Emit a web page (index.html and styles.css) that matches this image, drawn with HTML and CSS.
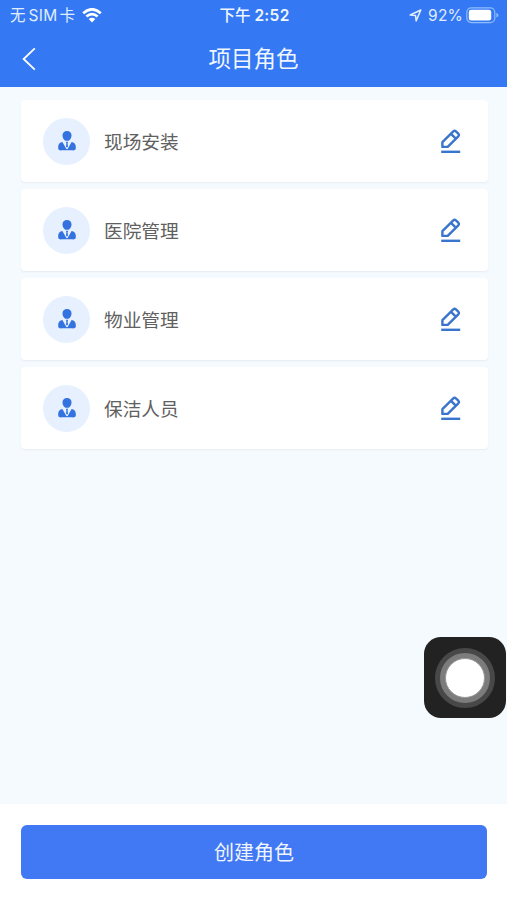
FILE: index.html
```html
<!DOCTYPE html>
<html lang="zh-CN">

<head>
    <meta charset="UTF-8">
    <title>项目角色</title>
    <link rel="stylesheet" href="styles.css">
</head>

<body>
    <!-- Shared icons -->
    <svg class="icon-defs">
        <symbol id="icon-person" viewBox="0 0 18 20">
            <path d="M9 0C6.2 0 4.5 1.8 4.5 4.4C4.5 6.7 5.9 9 7.5 9.8H10.5C12.1 9 13.5 6.7 13.5 4.4C13.5 1.8 11.8 0 9 0Z" />
            <path d="M4.4 10.9L8.2 17.8L3 19.3H2Q0.2 19.3 0.2 17.5V15.6C0.2 13 1.8 11.2 4.4 10.9ZM13.6 10.9L9.8 17.8L15 19.3H16Q17.8 19.3 17.8 17.5V15.6C17.8 13 16.2 11.2 13.6 10.9Z" />
            <path d="M2 19.3V17.2H7.5L8.4 18.2L9 17.8L9.6 18.2L10.5 17.2H16V19.3Z" />
            <path d="M7.9 10.8H10.1L9.6 12.6L10 15.4L9 16.7L8 15.4L8.4 12.6Z" />
        </symbol>
        <symbol id="icon-edit" viewBox="0 0 20 25">
            <path d="M1.4 17.9V13.2L12.3 2.3Q13.6 1.1 14.9 2.3L17.3 4.7Q18.5 6 17.3 7.3L6.7 17.9ZM10 4.8L14.8 9.6" fill="none" stroke="currentColor" stroke-width="2.4" stroke-linejoin="round" />
            <path d="M0.2 22.8H19.2" fill="none" stroke="currentColor" stroke-width="2.4" />
        </symbol>
    </svg>

    <header class="header">
        <div class="status-bar">
            <div class="status-left">
                <span>无</span><span class="sim">SIM</span><span>卡</span>
                <svg class="wifi" viewBox="0 0 20 15">
                    <path d="M1.2 5.2Q10 -2.6 18.8 5.2M4.4 8.6Q10 3.6 15.6 8.6" fill="none" stroke="#fff" stroke-width="2.7" />
                    <path d="M6.7 11.1Q10 8.2 13.3 11.1L10 14.6Z" fill="#fff" />
                </svg>
            </div>
            <div class="status-time">下午<span class="clock">2:52</span></div>
            <div class="status-right">
                <svg class="location" viewBox="0 0 13 13">
                    <path d="M1.2 6L11.8 1L7.2 11.8L6.5 6.5Z" fill="none" stroke="currentColor" stroke-width="1.6" stroke-linejoin="round" />
                </svg>
                <span class="percent">92%</span>
                <svg class="battery" viewBox="0 0 33 17">
                    <rect x="0.8" y="0.8" width="28" height="14.8" rx="4.5" fill="none" stroke="#8fbcff" stroke-width="1.2" />
                    <rect x="2.8" y="2.8" width="22.4" height="10.8" rx="2.4" fill="#fff" />
                    <path d="M30.4 5.8Q32.4 6.4 32.4 8.2T30.4 10.6Z" fill="#8fbcff" />
                </svg>
            </div>
        </div>
        <div class="nav-bar">
            <svg class="back" viewBox="0 0 14 24">
                <path d="M12.8 1.3L1.6 12L12.8 22.7" fill="none" stroke="#fff" stroke-width="1.8" />
            </svg>
            <h1>项目角色</h1>
        </div>
    </header>

    <!-- Role list -->
    <main class="role-list">
        <div class="role-card">
            <span class="avatar"><svg class="person"><use href="#icon-person" /></svg></span>
            <span class="role-name">现场安装</span>
            <svg class="edit"><use href="#icon-edit" /></svg>
        </div>
        <div class="role-card">
            <span class="avatar"><svg class="person"><use href="#icon-person" /></svg></span>
            <span class="role-name">医院管理</span>
            <svg class="edit"><use href="#icon-edit" /></svg>
        </div>
        <div class="role-card">
            <span class="avatar"><svg class="person"><use href="#icon-person" /></svg></span>
            <span class="role-name">物业管理</span>
            <svg class="edit"><use href="#icon-edit" /></svg>
        </div>
        <div class="role-card">
            <span class="avatar"><svg class="person"><use href="#icon-person" /></svg></span>
            <span class="role-name">保洁人员</span>
            <svg class="edit"><use href="#icon-edit" /></svg>
        </div>
    </main>

    <footer class="footer">
        <button class="create-btn">创建角色</button>
    </footer>

    <!-- Floating touch button -->
    <div class="touch">
        <div class="touch-ring">
            <div class="touch-dot"></div>
        </div>
    </div>
</body>

</html>
```

FILE: styles.css
```css
/* Basic page styles */
* {
    box-sizing: border-box;
}

body {
    margin: 0;
    height: 900px;
    display: flex;
    flex-direction: column;
    position: relative;
    overflow: hidden;
    background-color: #f5fafe;
    font-family: Inter, "Noto Sans CJK SC", sans-serif;
}

svg {
    display: block;
    flex-shrink: 0;
}

.icon-defs {
    display: none;
}

/* Header styles */
.header {
    height: 87px;
    background-color: #3478f3;
    color: #f0f6ff;
}

.status-bar {
    display: grid;
    grid-template-columns: 1fr auto 1fr;
    height: 30px;
    padding: 0 8px 0 10px;
    align-items: center;
    font-size: 15.5px;
    line-height: 28px;
    color: #e0edff;
}

.status-left,
.status-right {
    display: flex;
    align-items: center;
}

.status-left span,
.status-time,
.percent {
    padding-top: 2px;
}

.sim {
    margin: 0 2px 0 3px;
    letter-spacing: 0.3px;
}

.wifi {
    width: 20px;
    height: 15px;
    margin-left: 7px;
}

.status-time {
    font-weight: 500;
    color: #f0f6ff;
}

.clock {
    margin-left: 4px;
    font-weight: 600;
    letter-spacing: 0.3px;
}

.status-right {
    justify-content: flex-end;
}

.location {
    width: 13px;
    height: 13px;
    margin-right: 6px;
}

.percent {
    margin-right: 3px;
    letter-spacing: 0.2px;
}

.battery {
    width: 33px;
    height: 17px;
}

.nav-bar {
    display: grid;
    grid-template-columns: 1fr auto 1fr;
    align-items: center;
    height: 57px;
    padding: 0 22px;
}

.back {
    width: 14px;
    height: 24px;
}

h1 {
    margin: 0;
    font-size: 22.5px;
    font-weight: 400;
    line-height: 56px;
}

/* Role cards */
.role-list {
    flex: 1;
    display: flex;
    flex-direction: column;
    gap: 7px;
    padding: 13px 19px 0 21px;
}

.role-card {
    display: flex;
    align-items: center;
    height: 82px;
    padding: 0 27px 0 22px;
    border-radius: 4px;
    background-color: #fff;
    box-shadow: 0 1px 2px rgba(40, 60, 90, 0.07);
}

.avatar {
    display: flex;
    align-items: center;
    justify-content: center;
    width: 47px;
    height: 47px;
    border-radius: 50%;
    background-color: #e7f0fe;
}

.person {
    width: 18px;
    height: 20px;
    fill: #3473df;
}

.role-name {
    flex: 1;
    margin-left: 14px;
    padding-bottom: 2px;
    font-size: 18.7px;
    color: #606060;
}

.edit {
    width: 20px;
    height: 25px;
    color: #3975cc;
}

/* Footer styles */
.footer {
    height: 96px;
    padding: 21px 20px 0 21px;
    background-color: #fff;
}

.create-btn {
    display: block;
    width: 100%;
    height: 54px;
    padding: 0 0 2px;
    border: none;
    border-radius: 6px;
    background-color: #4178f4;
    color: #f0f6ff;
    font-family: inherit;
    font-size: 20px;
}

/* Touch button, floats over the page */
.touch {
    position: absolute;
    top: 637px;
    right: 1px;
    display: flex;
    align-items: center;
    justify-content: center;
    width: 82px;
    height: 81px;
    border-radius: 17px;
    background-color: #222;
}

.touch-ring {
    display: flex;
    align-items: center;
    justify-content: center;
    width: 60px;
    height: 60px;
    border: 5px solid #484848;
    border-radius: 50%;
    background-color: #7c7c7c;
}

.touch-dot {
    width: 40px;
    height: 40px;
    border: 1px solid #999;
    border-radius: 50%;
    background-color: #fff;
}
```
